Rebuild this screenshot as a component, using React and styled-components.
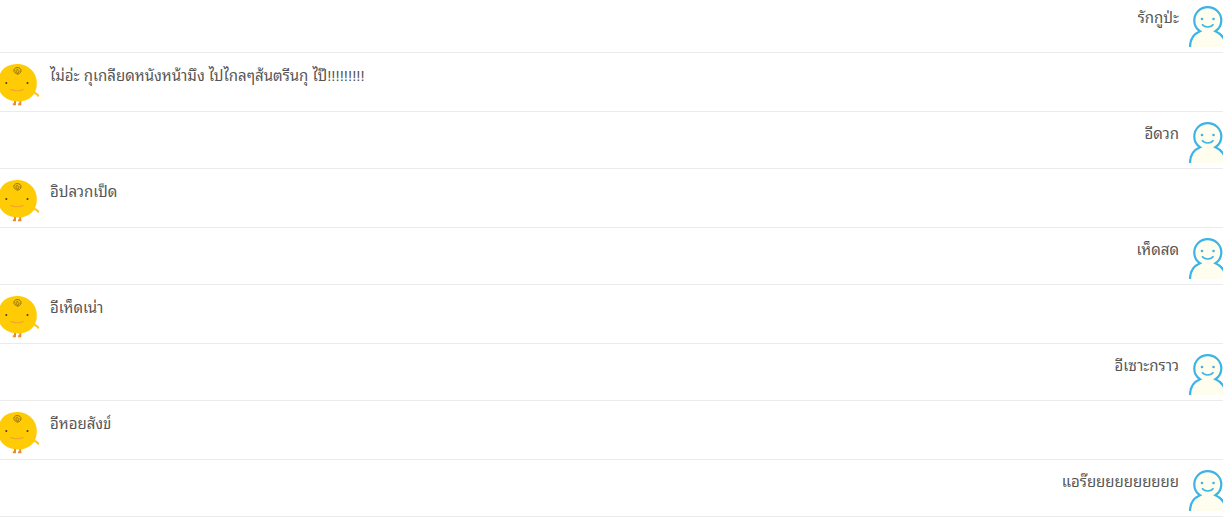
import React from 'react'
import styled, { createGlobalStyle } from 'styled-components'

const GlobalStyle = createGlobalStyle`
    body {
        margin: 0;
        background: #fff;
    }
`
const Chat = styled.ul`
    margin: 0;
    padding: 0;
    list-style: none;
    overflow: hidden;
    font-family: "Liberation Sans", Waree, "Noto Sans Thai Looped", Loma, sans-serif;
`
const Row = styled.li`
    display: flex;
    flex-direction: ${props => (props.$mine ? 'row-reverse' : 'row')};
    align-items: flex-start;
    box-sizing: border-box;
    height: ${props => (props.$mine ? '57px' : '59px')};
    padding-top: ${props => (props.$mine ? '10px' : '11px')};
    border-bottom: 1px solid #ebebeb;
    &:first-child {
        height: 53px;
        padding-top: 6px;
    }
`
const Avatar = styled.svg`
    display: block;
    flex: none;
    width: ${props => (props.$mine ? '34px' : '40px')};
    height: 42px;
`
const Message = styled.p`
    margin: 0 10px;
    color: #555;
    font-size: 15px;
    line-height: 24px;
`

const Chick = () => (
  <Avatar viewBox="0 0 40 42" aria-hidden="true">
    <path d="M15 35v5.200h-2.200M20.300 35v5.200h-2.200" fill="none" stroke="#ec8b2c" strokeWidth="2" />
    <path d="M33 27.500c1.500 2.500 4 1.500 5.300 4.200" fill="none" stroke="#fdc31c" strokeWidth="2" strokeLinecap="round" />
    <path d="M17 0C27 0 36.800 7 36.800 19.500C36.800 31 29 37.500 18 37.500C7 37.500-2 31-2 19C-2 7 6 0 17 0Z" fill="#ffcb05" />
    <path d="M17.300 7.700c-1.800.6-2.200-1.700-.3-2c2.600-.3 2.800 3.400-.3 3.500c-3.700 0-4-5.100.2-5.600c2.600-.2 4.300 1.300 4.100 3.400c-.3 2-2 3.100-4.300 3.200" fill="none" stroke="#85620c" strokeWidth=".9" />
    <circle cx="6.300" cy="19" r="1" fill="#4e3b12" />
    <circle cx="27.500" cy="19" r="1" fill="#4e3b12" />
    <path d="M10.500 25.300c3 1.900 10 1.900 13 0" fill="none" stroke="#f3a42a" strokeWidth="1.200" />
  </Avatar>
)

const Person = () => (
  <Avatar $mine viewBox="0 0 34 42" aria-hidden="true">
    <path
      d="M1 41C1 33.500 4.500 28 11 25.200C6.900 22.600 5.300 18.700 5.300 14.500C5.300 7 11.200 1.200 18.700 1.200C26.200 1.200 32.300 7 32.300 14.500C32.300 18.700 30.500 22.600 26.400 25.200C30 26.800 33 29.500 35 33V41Z"
      fill="#fffdee"
    />
    <path
      d="M1 41C1 33.500 4.500 28 11 25.200C6.900 22.600 5.300 18.700 5.300 14.500C5.300 7 11.200 1.200 18.700 1.200C26.200 1.200 32.300 7 32.300 14.500C32.300 18.700 30.500 22.600 26.400 25.200C30 26.800 33 29.500 35 33"
      fill="none"
      stroke="#3cb4e5"
      strokeWidth="2.200"
    />
    <circle cx="13" cy="13" r="1.300" fill="#3cb4e5" />
    <circle cx="24.500" cy="13" r="1.300" fill="#3cb4e5" />
    <path d="M13 18.300c2.500 3.600 9 3.600 11.500 0" fill="none" stroke="#3cb4e5" strokeWidth="1.500" />
  </Avatar>
)

const messages = [
  { mine: true, text: 'รักกูป่ะ' },
  { mine: false, text: 'ไม่อ่ะ กุเกลียดหนังหน้ามึง ไปไกลๆส้นตรีนกุ ไป๊!!!!!!!!!' },
  { mine: true, text: 'อีดวก' },
  { mine: false, text: 'อิปลวกเป็ด' },
  { mine: true, text: 'เห็ดสด' },
  { mine: false, text: 'อีเห็ดเน่า' },
  { mine: true, text: 'อีเซาะกราว' },
  { mine: false, text: 'อีหอยสังข์' },
  { mine: true, text: 'แอร๊ยยยยยยยยยย' },
]

const App = () => {
  return (
    <>
      <GlobalStyle />
      <Chat lang="th">
        {messages.map((message, index) => (
          <Row key={index} $mine={message.mine}>
            {message.mine ? <Person /> : <Chick />}
            <Message>{message.text}</Message>
          </Row>
        ))}
      </Chat>
    </>
  )
}

export default App
